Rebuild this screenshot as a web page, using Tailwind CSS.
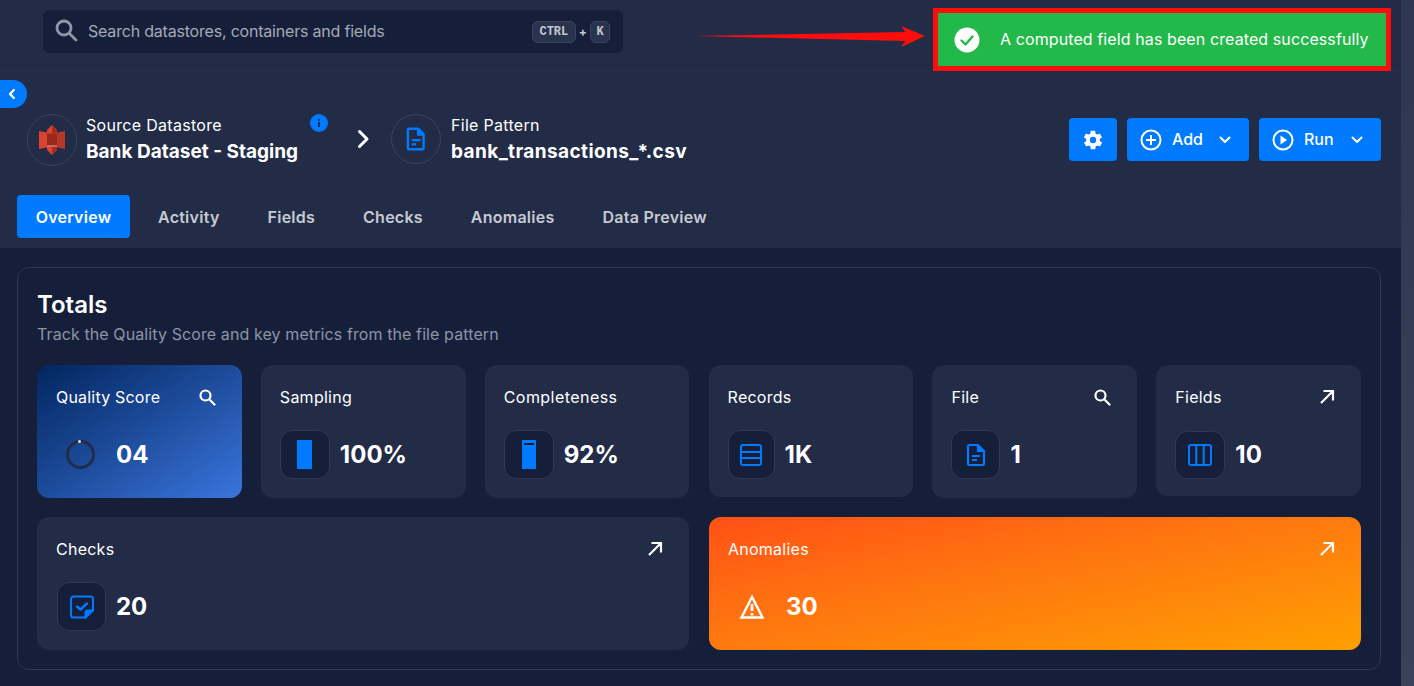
<!DOCTYPE html>
<html lang="en"><head><meta charset="utf-8"><script src="https://cdn.jsdelivr.net/npm/@tailwindcss/browser@4"></script><title>Overview</title></head>
<body class="m-0 bg-[#232c47]">
<div class="relative flex h-[686px] w-[1414px] overflow-hidden bg-[#232c47] font-['Inter',sans-serif] text-white">
  <main class="flex min-w-0 flex-1 flex-col">
    <header class="flex h-[66px] items-start border-b border-[#1e2741] pl-[43px] pt-[10px]">
      <div class="flex h-[43px] w-[580px] items-center rounded-md bg-[#161f3a] pl-[11px] pr-[13px]">
        <svg class="mt-[-4px] h-[24px] w-[24px] text-[#9097a8]" viewBox="0 0 24 24" fill="none" stroke="currentColor" stroke-width="2.800"><circle cx="10" cy="10" r="7"/><path d="M15.200 15.200 22 22" stroke-linecap="round"/></svg>
        <span class="ml-[10px] flex-1 pb-[2px] text-[16px] tracking-[-0.2px] text-[#a4a9b7]">Search datastores, containers and fields</span>
        <span class="flex h-[22px] w-[44px] items-center justify-center rounded-md border border-[#3c445d] bg-[#2a334d] font-['Liberation_Mono',monospace] text-[12px] font-bold text-[#c4c7d0]">CTRL</span>
        <span class="mx-[3px] text-[12px] font-bold text-[#c4c7d0]">+</span>
        <span class="flex h-[22px] w-[14px] items-center justify-center rounded-md border border-[#3c445d] bg-[#2a334d] px-[9px] font-['Liberation_Mono',monospace] text-[12px] font-bold text-[#c4c7d0]">K</span>
      </div>
    </header>

    <section class="relative h-[182px] shrink-0">
      <button class="absolute left-0 top-[14px] flex h-[28px] w-[27px] items-center justify-center rounded-r-full bg-[#007bff] pr-[4px]" aria-label="Collapse">
        <svg class="h-[14px] w-[14px]" viewBox="0 0 14 14" fill="none" stroke="#fff" stroke-width="2.400" stroke-linecap="round" stroke-linejoin="round"><path d="M8.800 3 5 7l3.800 4"/></svg>
      </button>
      <div class="flex items-start pl-[27px] pr-[20px] pt-[48px]">
        <div class="flex h-[52px] w-[50px] items-center justify-center rounded-full border border-[#3a435c]">
          <svg class="h-[30px] w-[26px]" viewBox="0 0 26 30"><path d="M0 6 8 7.500v15L0 24z" fill="#d9432f"/><path d="M26 6l-8 1.500v15l8 1.500z" fill="#b5382a"/><path d="M8 7.500h10v15H8z" fill="#982a1c"/><path d="M8 5l5-5 5 5v3.500H8z" fill="#d9432f"/><path d="M13 0l5 5v3.500h-5z" fill="#a12e1f"/><path d="M8 25l5 5 5-5v-3.500H8z" fill="#d9432f"/><path d="M13 30l5-5v-3.500h-5z" fill="#a12e1f"/><path d="M8 20.500h10v1H8z" fill="#e8a094"/></svg>
        </div>
        <div class="relative ml-[9px] mt-[-1px] w-[233px]">
          <div class="text-[16px] leading-[24px] tracking-[0.3px]">Source Datastore</div>
          <div class="mt-[1px] text-[19px] font-bold leading-[28px]">Bank Dataset - Staging</div>
          <span class="absolute left-[224px] top-[1px] flex h-[18px] w-[18px] items-center justify-center rounded-full bg-[#007bff]">
            <svg class="h-[12px] w-[12px]" viewBox="0 0 12 12" fill="#0b2c6b"><rect x="5" y="5" width="2" height="5"/><rect x="5" y="2" width="2" height="2"/></svg>
          </span>
        </div>
        <svg class="ml-[32px] mt-[13px] h-[24px] w-[24px]" viewBox="0 0 24 24" fill="none" stroke="#fff" stroke-width="3" stroke-linecap="round" stroke-linejoin="round"><path d="M8.500 4.500 16 12l-7.500 7.500"/></svg>
        <div class="ml-[16px] flex h-[50px] w-[50px] items-center justify-center rounded-full border border-[#3a435c]">
          <svg class="h-[26px] w-[26px]" viewBox="0 0 24 24" fill="none" stroke="#007bff" stroke-width="2.200"><path d="M6 2.500h8l5 5V20a1.500 1.500 0 0 1-1.500 1.500h-11.500A1.500 1.500 0 0 1 4.500 20V4A1.500 1.500 0 0 1 6 2.500z" stroke-linejoin="round"/><path d="M14 3v5h5" fill="#007bff"/><path d="M8 13h8M8 17h4"/></svg>
        </div>
        <div class="ml-[10px] mt-[-1px] flex-1">
          <div class="text-[16px] leading-[24px] tracking-[0.3px]">File Pattern</div>
          <div class="mt-[1px] text-[19px] font-bold leading-[28px] tracking-[0.4px]">bank_transactions_*.csv</div>
        </div>
        <div class="mt-[4px] flex gap-[10px]">
          <button class="flex h-[43px] w-[48px] items-center justify-center rounded bg-[#007bff]" aria-label="Settings">
            <svg class="h-[22px] w-[22px]" viewBox="0 0 24 24" fill="#fff"><path fill-rule="evenodd" d="M19.400 13a7.600 7.600 0 0 0 0-2l2.100-1.600a.5.5 0 0 0 .1-.6l-2-3.500a.5.5 0 0 0-.6-.2l-2.500 1a7.500 7.500 0 0 0-1.700-1l-.4-2.700a.5.5 0 0 0-.5-.4h-4a.5.5 0 0 0-.5.4l-.4 2.700a7.500 7.500 0 0 0-1.700 1l-2.500-1a.5.5 0 0 0-.6.2l-2 3.500a.5.5 0 0 0 .1.600L4.600 11a7.600 7.600 0 0 0 0 2l-2.100 1.600a.5.5 0 0 0-.1.6l2 3.500a.5.5 0 0 0 .6.2l2.500-1a7.500 7.500 0 0 0 1.700 1l.4 2.700a.5.5 0 0 0 .5.4h4a.5.5 0 0 0 .5-.4l.4-2.700a7.500 7.500 0 0 0 1.700-1l2.500 1a.5.5 0 0 0 .6-.2l2-3.500a.5.5 0 0 0-.1-.6zM12 15.500a3.500 3.500 0 1 1 0-7 3.500 3.500 0 0 1 0 7z"/></svg>
          </button>
          <button class="flex h-[43px] w-[122px] items-center rounded bg-[#007bff] pl-[13px]">
            <svg class="h-[22px] w-[22px]" viewBox="0 0 22 22" fill="none" stroke="#fff" stroke-width="2"><circle cx="11" cy="11" r="9.500"/><path d="M11 6v10M6 11h10"/></svg>
            <span class="ml-[10px] pb-[1px] text-[16px] font-medium">Add</span>
            <svg class="ml-[14px] h-[16px] w-[16px]" viewBox="0 0 16 16" fill="none" stroke="#fff" stroke-width="2" stroke-linecap="round" stroke-linejoin="round"><path d="m3.500 5.500 4.500 4.500 4.500-4.500"/></svg>
          </button>
          <button class="flex h-[43px] w-[122px] items-center rounded bg-[#007bff] pl-[13px]">
            <svg class="h-[22px] w-[22px]" viewBox="0 0 22 22" fill="none" stroke="#fff" stroke-width="2"><circle cx="11" cy="11" r="9.500"/><path d="M8.500 6.500v9l6.500-4.500z" fill="#fff" stroke="none"/></svg>
            <span class="ml-[10px] pb-[1px] text-[16px] font-medium">Run</span>
            <svg class="ml-[15px] h-[16px] w-[16px]" viewBox="0 0 16 16" fill="none" stroke="#fff" stroke-width="2" stroke-linecap="round" stroke-linejoin="round"><path d="m3.500 5.500 4.500 4.500 4.500-4.500"/></svg>
          </button>
        </div>
      </div>
      <nav class="absolute left-[17px] top-[129px] flex items-center text-[16px] font-semibold tracking-[0.25px] text-[#c7cad3]">
        <a class="flex h-[43px] w-[113px] items-center justify-center rounded bg-[#007bff] text-white">Overview</a>
        <a class="ml-[28px]">Activity</a>
        <a class="ml-[48px]">Fields</a>
        <a class="ml-[48px]">Checks</a>
        <a class="ml-[48px]">Anomalies</a>
        <a class="ml-[48px]">Data Preview</a>
      </nav>
    </section>

    <section class="flex-1 bg-[#161f3a] px-[17px] pt-[19px]">
      <div class="h-[403px] w-[1364px] rounded-xl border border-[#303953] px-[19px] pt-[22px]">
        <h1 class="text-[24px] font-semibold leading-[30px]">Totals</h1>
        <p class="mt-[2px] text-[16px] leading-[24px] tracking-[0.1px] text-[#8e94a6]">Track the Quality Score and key metrics from the file pattern</p>

        <div class="mt-[19px] grid grid-cols-6 items-start gap-x-[19.200px]">
          <div class="h-[133px] rounded-xl bg-linear-to-br from-[#04265f] to-[#3a76de] pl-[19px] pr-[26px] pt-[20px]">
            <div class="flex items-center justify-between"><span class="text-[16px] leading-[24px] tracking-[0.2px]">Quality Score</span>
              <svg class="h-[18px] w-[18px]" viewBox="0 0 18 18" fill="none" stroke="#fff" stroke-width="2.200"><circle cx="7.500" cy="7.500" r="5"/><path d="m11.500 11.500 5 5" stroke-linecap="round"/></svg></div>
            <div class="mt-[21px] flex items-center pl-[10px]">
              <div class="relative h-[29px] w-[29px] rounded-full border-[3px] border-[#232c47]"><span class="absolute left-[9px] top-[-3px] h-[3px] w-[3px] rounded-full bg-[#dfe3ee]"></span></div>
              <span class="ml-[21px] text-[24px] font-bold leading-[49px]">04</span>
            </div>
          </div>
          <div class="h-[133px] rounded-xl bg-[#232c47] pl-[19px] pt-[20px]">
            <div class="text-[16px] leading-[24px] tracking-[0.25px]">Sampling</div>
            <div class="mt-[21px] flex items-center">
              <div class="flex h-[49px] w-[50px] items-center justify-center rounded-xl border border-[#303953] bg-[#161f3a]"><div class="h-[29px] w-[15px] bg-[#007bff]"></div></div>
              <span class="ml-[10px] text-[24px] font-bold leading-[49px]">100%</span>
            </div>
          </div>
          <div class="h-[133px] rounded-xl bg-[#232c47] pl-[19px] pt-[20px]">
            <div class="text-[16px] leading-[24px] tracking-[0.45px]">Completeness</div>
            <div class="mt-[21px] flex items-center">
              <div class="flex h-[49px] w-[50px] items-center justify-center rounded-xl border border-[#303953] bg-[#161f3a]"><div class="h-[29px] w-[14px] border-t-[2px] border-[#007bff] bg-[#007bff] pt-[1px]"><div class="mx-auto h-[2px] w-[10px] bg-[#161f3a]"></div></div></div>
              <span class="ml-[10px] text-[24px] font-bold leading-[49px]">92%</span>
            </div>
          </div>
          <div class="h-[132px] rounded-xl bg-[#232c47] pl-[19px] pt-[20px]">
            <div class="text-[16px] leading-[24px] tracking-[0.25px]">Records</div>
            <div class="mt-[21px] flex items-center">
              <div class="flex h-[49px] w-[47px] items-center justify-center rounded-xl border border-[#303953] bg-[#161f3a]">
                <svg class="h-[24px] w-[24px]" viewBox="0 0 24 24" fill="none" stroke="#007bff" stroke-width="2"><rect x="2" y="2" width="20" height="20" rx="2"/><path d="M2 9h20M2 15h20"/></svg></div>
              <span class="ml-[10px] text-[24px] font-bold leading-[49px]">1K</span>
            </div>
          </div>
          <div class="h-[133px] rounded-xl bg-[#232c47] pl-[19px] pr-[26px] pt-[20px]">
            <div class="flex items-center justify-between"><span class="text-[16px] leading-[24px] tracking-[0.25px]">File</span>
              <svg class="h-[18px] w-[18px]" viewBox="0 0 18 18" fill="none" stroke="#fff" stroke-width="2.200"><circle cx="7.500" cy="7.500" r="5"/><path d="m11.500 11.500 5 5" stroke-linecap="round"/></svg></div>
            <div class="mt-[21px] flex items-center">
              <div class="flex h-[49px] w-[49px] items-center justify-center rounded-xl border border-[#303953] bg-[#161f3a]">
                <svg class="h-[24px] w-[24px]" viewBox="0 0 24 24" fill="none" stroke="#007bff" stroke-width="2.200"><path d="M5.500 2h8.500l6 6v12.500a1.500 1.500 0 0 1-1.500 1.500h-13A1.500 1.500 0 0 1 4 20.500v-17A1.500 1.500 0 0 1 5.500 2z" stroke-linejoin="round"/><path d="M14 2.500V8h5.500" fill="#007bff"/><path d="M8 13h8M8 17h5"/></svg></div>
              <span class="ml-[10px] text-[24px] font-bold leading-[49px]">1</span>
            </div>
          </div>
          <div class="h-[131px] rounded-xl bg-[#232c47] pl-[19px] pr-[25px] pt-[20px]">
            <div class="flex items-center justify-between"><span class="text-[16px] leading-[24px] tracking-[0.25px]">Fields</span>
              <svg class="h-[18px] w-[18px]" viewBox="0 0 18 18" fill="none" stroke="#fff" stroke-width="2.200"><path d="M3 15 15 3M5.500 3H15v9.500"/></svg></div>
            <div class="mt-[21px] flex items-center">
              <div class="flex h-[48px] w-[50px] items-center justify-center rounded-xl border border-[#303953] bg-[#161f3a]">
                <svg class="h-[24px] w-[24px]" viewBox="0 0 24 24" fill="none" stroke="#007bff" stroke-width="2"><rect x="1" y="2" width="22" height="20" rx="2"/><path d="M8.300 2v20M15.700 2v20"/></svg></div>
              <span class="ml-[10px] text-[24px] font-bold leading-[49px]">10</span>
            </div>
          </div>
        </div>

        <div class="mt-[19px] grid grid-cols-2 gap-x-[20px]">
          <div class="h-[133px] rounded-xl bg-[#232c47] pl-[19px] pr-[25px] pt-[20px]">
            <div class="flex items-center justify-between"><span class="text-[16px] leading-[24px] tracking-[0.25px]">Checks</span>
              <svg class="h-[18px] w-[18px]" viewBox="0 0 18 18" fill="none" stroke="#fff" stroke-width="2.200"><path d="M3 15 15 3M5.500 3H15v9.500"/></svg></div>
            <div class="mt-[21px] flex items-center pl-[1px]">
              <div class="flex h-[49px] w-[49px] items-center justify-center rounded-xl border border-[#303953] bg-[#161f3a]">
                <svg class="h-[24px] w-[24px]" viewBox="0 0 24 24" fill="none" stroke="#007bff" stroke-width="2"><path d="M15 22.500H3.500a2.500 2.500 0 0 1-2.500-2.500V4A2.500 2.500 0 0 1 3.500 1.500h17A2.500 2.500 0 0 1 23 4v11z" stroke-linejoin="round"/><path d="M23 15.500l-7.500 7v-5a2 2 0 0 1 2-2z" fill="#007bff"/><path d="m7 11.500 3.500 3 6.500-6" stroke-width="2.400" stroke-linecap="round" stroke-linejoin="round"/></svg></div>
              <span class="ml-[10px] text-[24px] font-bold leading-[49px]">20</span>
            </div>
          </div>
          <div class="h-[133px] rounded-xl bg-linear-to-br from-[#ff4f15] to-[#ff9f00] pl-[19px] pr-[25px] pt-[20px]">
            <div class="flex items-center justify-between"><span class="text-[16px] leading-[24px] tracking-[0.25px]">Anomalies</span>
              <svg class="h-[18px] w-[18px]" viewBox="0 0 18 18" fill="none" stroke="#fff" stroke-width="2.200"><path d="M3 15 15 3M5.500 3H15v9.500"/></svg></div>
            <div class="mt-[21px] flex items-center pl-[11px]">
              <svg class="h-[26px] w-[26px]" viewBox="0 0 26 26" fill="none" stroke="#fff" stroke-width="2.400"><path d="M13 3 2.500 23.500h21z"/><path d="M13 10v7M13 19v2.500" stroke-width="2.800"/></svg>
              <span class="ml-[21px] text-[24px] font-bold leading-[49px]">30</span>
            </div>
          </div>
        </div>
      </div>
    </section>
  </main>
  <div class="w-[13px] shrink-0 bg-linear-to-b from-[#2e374f] to-[#3a4259]"></div>

  <svg class="absolute left-[695px] top-[25px] h-[22px] w-[230px]" viewBox="0 0 232 22" preserveAspectRatio="none"><path d="M0 11 212 7 208 1l24 10-24 11 4-6z" fill="#ff0d0d"/></svg>
  <div class="absolute left-[933px] top-[8px] flex h-[63px] w-[458px] items-center border-[5px] border-[#ff0d0d] bg-[#22b84a] pl-[16px]">
    <svg class="h-[26px] w-[26px]" viewBox="0 0 26 26"><circle cx="13" cy="13" r="12.500" fill="#fff"/><path d="m7.500 13.500 4 4 7-8" fill="none" stroke="#22b84a" stroke-width="2.400" stroke-linecap="round" stroke-linejoin="round"/></svg>
    <span class="ml-[20px] pb-[1px] text-[16px] tracking-[0.1px]">A computed field has been created successfully</span>
  </div>
</div>
</body></html>
